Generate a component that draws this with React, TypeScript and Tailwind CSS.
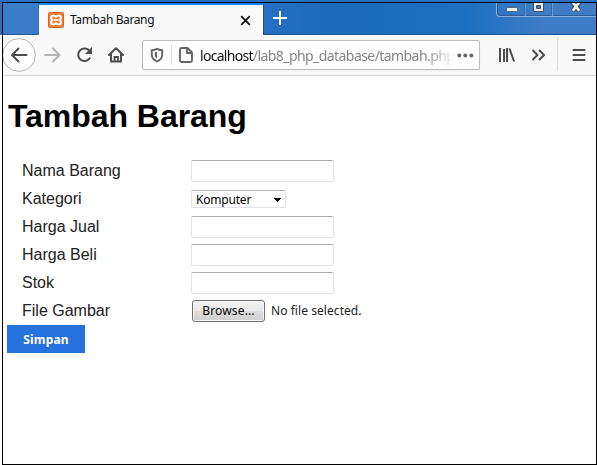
import React from "react";

const fields = ["Nama Barang", "Kategori", "Harga Jual", "Harga Beli", "Stok", "File Gambar"];

function TextField() {
  return (
    <input className="block h-[22px] w-[143px] rounded-[2px] border border-[#e2e3ea] border-t-[#abadb3] bg-white outline-none" />
  );
}

function Control({ name }: { name: string }) {
  if (name === "Kategori") {
    return (
      <button className="flex h-[18px] w-[95px] items-center justify-between rounded-[2px] border border-[#e2e3ea] border-t-[#abadb3] bg-white pr-1 pl-1 font-['Noto_Sans',sans-serif] text-[12px] leading-4 text-black">
        <span className="pt-px tracking-[-0.2px]">Komputer</span>
        <svg className="mt-0.5" width="7" height="4" viewBox="0 0 7 4" shapeRendering="crispEdges"><path d="M0 0h7v1H6v1H5v1H4v1H3V3H2V2H1V1H0z" /></svg>
      </button>
    );
  }
  if (name === "File Gambar") {
    return (
      <div className="flex items-center pl-px font-['Noto_Sans',sans-serif] text-[12px]">
        <button className="h-[22px] w-[73px] rounded-[3px] border border-[#707070] bg-[linear-gradient(#f2f2f2_0%,#ebebeb_48%,#dddddd_52%,#cfcfcf_100%)] leading-5 tracking-[0.15px] whitespace-nowrap text-black shadow-[inset_0_0_0_1px_#f5f5f5]">Browse...</button>
        <span className="ml-1.5 tracking-[0.06px] whitespace-nowrap text-[#222]">No file selected.</span>
      </div>
    );
  }
  return <TextField />;
}

function TitleBar() {
  return (
    <div className="flex h-8 bg-[linear-gradient(90deg,#3b7bc8_0%,#2a71c2_38%,#1c6bbd_55%,#1d6fc1_78%,#3e7dc5_91%,#3e7dc5_100%)]">
      <div className="w-9 border-r border-b border-[#3470b5] border-b-[#285994] bg-[#3b7cc9]" />
      <div className="flex h-8 w-56 items-center border-t-2 border-[#0a84ff] bg-[#f9f9fa]">
        <svg className="ml-[9px]" width="16" height="16" viewBox="0 0 16 16">
          <rect x=".5" y=".5" width="15" height="15" rx="1" fill="#f0803a" stroke="#d9651d" />
          <path d="M5.2 3.6h1.2L8 5l1.6-1.4h1.5q1.9.2 1.9 2.2L12 8l1 2.2q0 2-1.9 2.2H9.6L8 11l-1.6 1.4H5.2Q3 12.2 3 10.2L4 8 3 5.8q0-2 2.2-2.2z" fill="none" stroke="#fff" strokeWidth="1.9" strokeLinejoin="round" />
          <path d="M5.3 8h5.4" stroke="#fff" strokeWidth="1.6" />
        </svg>
        <span className="ml-1.5 w-[170px] font-['Noto_Sans',sans-serif] text-[12px] tracking-[-0.38px] text-[#0c0c0d]">Tambah Barang</span>
        <svg width="11" height="11" viewBox="0 0 11 11"><path d="m1.2 1.2 8.6 8.6m0-8.6L1.2 9.8" stroke="#111" strokeWidth="1.8" /></svg>
      </div>
      <div className="flex flex-1 items-start border-b border-l border-[#195392]">
        <svg className="mt-[7px] ml-[9px]" width="15" height="16" viewBox="0 0 15 16"><path d="M7 1v14M0 8h14" stroke="#fff" strokeWidth="2" /></svg>
        <div className="ml-auto flex h-[14px] w-[100px] rounded-bl-[4px] border-b border-l border-[#88aedb] text-[#244f83] shadow-[inset_1px_-1px_0_#2c5d98]">
          <div className="w-7 border-r border-[#3b659e] pt-1 pl-[9px] shadow-[1px_0_0_#6d9bd1]">
            <svg width="12" height="6" viewBox="0 0 12 6"><rect x=".5" y=".5" width="11" height="4" rx="1" fill="#f3f3f3" stroke="#596477" /></svg>
          </div>
          <div className="w-[27px] border-r border-[#3b659e] pl-2 shadow-[1px_0_0_#6d9bd1]">
            <svg width="12" height="10" viewBox="0 0 12 10"><path d="M.5-1h10v9.5H.5zM3.5 2.5v3h4v-3z" fill="#f3f3f3" fillRule="evenodd" stroke="#465166" /></svg>
          </div>
          <div className="pl-[18px]">
            <svg width="13" height="10" viewBox="0 0 13 10"><path d="m2.5-1 7 9m0-9-7 9" stroke="#465166" strokeWidth="4.6" /><path d="m2.8-.7 6.4 8.4m0-8.4L2.8 7.7" stroke="#f5f5f5" strokeWidth="2.7" /></svg>
          </div>
        </div>
      </div>
    </div>
  );
}

function Toolbar() {
  return (
    <div className="flex h-[41px] items-center border-b border-[#d9d9da] bg-[#f9f9fa] text-[#4c4c4f]">
      <svg width="139" height="40" viewBox="3 35 139 40" fill="none" stroke="currentColor" strokeWidth="2">
        <circle cx="19" cy="55" r="16.4" fill="#fff" stroke="#b5b5b6" strokeWidth="1" />
        <path d="M26.5 55H12.5M18.5 48.5 12 55l6.5 6.5" strokeLinecap="round" strokeLinejoin="round" />
        <path d="M45 55h14M53 48.5l6.5 6.5-6.5 6.5" stroke="#b4b4b5" strokeLinecap="round" strokeLinejoin="round" />
        <path d="M89.5 51a6.3 6.3 0 1 0 .2 7.3" strokeLinecap="round" />
        <path d="M92 47v7h-7z" fill="currentColor" stroke="none" />
        <path d="m109 55 7-6.7 7 6.7M111 54v7.5h10V54" strokeLinecap="round" strokeLinejoin="round" />
        <path d="M114.5 62v-5h3.5v5" strokeWidth="1.8" />
      </svg>
      <div className="flex h-[30px] w-[338px] items-center rounded-[2px] border border-[#bcbcbd] bg-white shadow-[0_1px_2px_#0000000a]">
        <svg className="shrink-0" width="57" height="28" viewBox="143 41 57 28" fill="none" stroke="#656567">
          <path d="M151.8 50.2c2-.2 3.5-.5 5.2-1.3 1.7.8 3.2 1.1 5.2 1.3v4.5c0 3.2-2.1 5.4-5.2 6.8-3.1-1.4-5.2-3.6-5.2-6.8z" strokeWidth="1.9" />
          <path d="M157 51.8v6.8c-1.4-.9-2.2-2-2.2-3.8v-2.5z" fill="#656567" stroke="none" />
          <path d="M171.5 44v21" stroke="#dfdfe0" />
          <path d="M180 49.5q0-1.5 1.5-1.5h6l4.5 4.5v8q0 1.5-1.5 1.5h-9q-1.5 0-1.5-1.5zM187 48v5h5" strokeWidth="1.9" strokeLinejoin="round" />
        </svg>
        <div className="w-[251px] mask-[linear-gradient(90deg,#000_225px,transparent_256px)] pt-px font-['Noto_Sans',sans-serif] text-[14px] leading-6 tracking-[-0.57px] whitespace-nowrap text-[#858587]">
          <span className="tracking-[-0.7px] text-[#111]">localhost</span>/lab8_php_database/tambah.php
        </div>
        <svg className="ml-1.5" width="17" height="5" viewBox="0 0 17 5" fill="#666"><circle cx="2.3" cy="2.5" r="2" /><circle cx="8.3" cy="2.5" r="2" /><circle cx="14.3" cy="2.5" r="2" /></svg>
      </div>
      <svg width="116" height="40" viewBox="480 35 116 40" fill="none" stroke="currentColor" strokeWidth="2">
        <path d="M500 48v14M504 49v13M507 48v14M509.5 48.5 514 61.5" />
        <path d="m532.5 50 5 5-5 5M539 50l5 5-5 5" strokeLinejoin="round" />
        <path d="M557.5 38v33" stroke="#dadadb" strokeWidth="1" />
        <path d="M573.5 50h11M573.5 55h11M573.5 60h11" strokeLinecap="round" />
      </svg>
    </div>
  );
}

export default function App() {
  return (
    <div className="h-[465px] w-[597px] overflow-hidden bg-[linear-gradient(#2b70bd_0_35px,#fff_35px)] pt-0.5 pl-0.5">
      <div className="h-[463px] border border-black bg-white">
        <TitleBar />
        <Toolbar />
        <main className="pt-[22px] pl-1.5 font-['Liberation_Sans',Arial,sans-serif]">
          <h1 className="-ml-px text-[32px] leading-9 font-bold tracking-[-0.05px] text-black">Tambah Barang</h1>
          <form className="pt-[23px]" onSubmit={(event) => event.preventDefault()}>
            {fields.map((name) => (
              <div className="flex h-7 items-center pl-[13px]" key={name}>
                <label className="w-[169px] text-base leading-5 text-[#222]">{name}</label>
                <Control name={name} />
              </div>
            ))}
            <button className="-ml-0.5 block h-7 w-[78px] bg-[#2572df] pt-px font-['Noto_Sans',sans-serif] text-[12px] leading-7 font-bold tracking-[0.2px] text-white">Simpan</button>
          </form>
        </main>
      </div>
    </div>
  );
}
